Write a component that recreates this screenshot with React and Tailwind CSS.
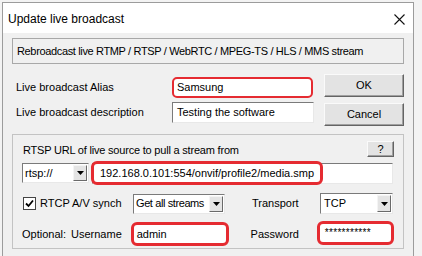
import React from "react";

function Arrow() {
  return (
    <svg width="7" height="4" viewBox="0 0 7 4" className="block">
      <path d="M0 0H7L3.5 4Z" fill="#000" />
    </svg>
  );
}

function DropBtn() {
  return (
    <div className="w-[14px] shrink-0 self-stretch my-[1px] mr-[1px] bg-[#e4e4e4] border-t border-l border-t-[#f4f4f4] border-l-[#f4f4f4] border-b border-r border-b-[#6a6a6a] border-r-[#6a6a6a] flex items-center justify-center">
      <Arrow />
    </div>
  );
}

function Combo({ text, w, h, pl }) {
  return (
    <div
      className={`flex bg-white border-t border-l border-t-[#7a7a7a] border-l-[#7a7a7a] border-b border-r border-b-[#e8e8e8] border-r-[#e8e8e8] ${w} ${h}`}
    >
      <div className={`flex-1 flex items-center whitespace-nowrap ${pl}`}>{text}</div>
      <DropBtn />
    </div>
  );
}

function Button({ children, w, h }) {
  return (
    <div
      className={`${w} ${h} bg-[#e3e3e3] border-t border-l border-t-[#fafafa] border-l-[#fafafa] border-b border-r border-b-[#646464] border-r-[#646464] flex items-center justify-center shadow-[inset_-1px_-1px_0_#a0a0a0]`}
    >
      {children}
    </div>
  );
}

export default function App() {
  return (
    <div className="w-[422px] h-[256px] bg-[#f3f3f3] overflow-hidden pt-[2px] pl-[2px] font-['Liberation_Sans',Arial,sans-serif] text-[11px] text-black leading-none">
      <div className="w-[412px] h-[260px] border border-[#9c9c9c] bg-[#f0f0f0]">
        {/* Title bar */}
        <div className="h-[30px] bg-white flex items-center justify-between pl-[5px] pr-[8px]">
          <span className="text-[12px] pt-[1px]">Update live broadcast</span>
          <svg width="11" height="11" viewBox="0 0 11 11" className="mt-[2px]">
            <path d="M0.5 0.5L10.5 10.5M10.5 0.5L0.5 10.5" stroke="#111" strokeWidth="1.1" />
          </svg>
        </div>

        <div className="px-[9px] pt-[5px]">
          {/* header box */}
          <div className="h-[26px] border border-[#a8a8a8] flex items-center pl-[4px] tracking-[-0.35px] whitespace-nowrap">
            Rebroadcast live RTMP / RTSP / WebRTC / MPEG-TS / HLS / MMS stream
          </div>

          {/* alias / description + buttons */}
          <div className="flex mt-[10px]">
            <div className="w-[312px] flex flex-col pt-[3px] gap-[4px]">
              <div className="flex items-center h-[21px]">
                <span className="w-[160px] pl-[4px]">Live broadcast Alias</span>
                <div className="w-[141px] h-[21px] bg-white border-2 border-[#e52b31] rounded-[5px] flex items-center pl-[3px]">
                  Samsung
                </div>
              </div>
              <div className="flex items-center h-[21px]">
                <span className="w-[160px] pl-[4px]">Live broadcast description</span>
                <div className="w-[142px] h-[21px] bg-white border-t border-l border-t-[#7a7a7a] border-l-[#7a7a7a] border-b border-r border-b-[#e8e8e8] border-r-[#e8e8e8] flex items-center pl-[4px]">
                  Testing the software
                </div>
              </div>
            </div>
            <div className="flex flex-col gap-[6px]">
              <Button w="w-[80px]" h="h-[23px]">OK</Button>
              <Button w="w-[80px]" h="h-[23px]">Cancel</Button>
            </div>
          </div>

          {/* group box */}
          <div className="mt-[8px] h-[115px] border border-[#c3c3c3] pl-[10px] pr-[9px] pt-[6px]">
            <div className="flex justify-between h-[16px]">
              <span className="pt-[4px] tracking-[-0.2px]">RTSP URL of live source to pull a stream from</span>
              <Button w="w-[27px]" h="h-[16px]">?</Button>
            </div>

            <div className="flex mt-[6px] -ml-px items-start">
              <Combo text="rtsp://" w="w-[67px]" h="h-[20px]" pl="pl-[2px]" />
              <div className="relative ml-[3px] w-[301px] h-[21px] bg-white border-t border-l border-t-[#7a7a7a] border-l-[#7a7a7a] border-b border-r border-b-[#e8e8e8] border-r-[#e8e8e8] flex items-center pl-[7px] whitespace-nowrap">
                192.168.0.101:554/onvif/profile2/media.smp
                <div className="absolute left-[-2px] top-[-3px] w-[232px] h-[24px] border-[3px] border-[#e52b31] rounded-[6px]" />
              </div>
            </div>

            <div className="flex mt-[9px] h-[21px] items-center">
              <div className="w-[110px] flex items-center">
                <div className="w-[13px] h-[13px] bg-white border border-[#444] flex items-center justify-center">
                  <svg width="9" height="9" viewBox="0 0 9 9">
                    <path d="M1 4.5L3.5 7L8 1.5" stroke="#000" strokeWidth="1.8" fill="none" />
                  </svg>
                </div>
                <span className="ml-[4px]">RTCP A/V synch</span>
              </div>
              <Combo text={<span className="tracking-[-0.4px]">Get all streams</span>} w="w-[92px]" h="h-[20px]" pl="pl-[2px]" />
              <span className="w-[95px] pl-[27px]">Transport</span>
              <Combo text="TCP" w="w-[73px]" h="h-[21px]" pl="pl-[3px]" />
            </div>

            <div className="flex mt-[8px] h-[24px] items-center -ml-px">
              <div className="w-[110px] flex">
                <span>Optional:</span>
                <span className="ml-[5px]">Username</span>
              </div>
              <div className="w-[99px] h-[24px] bg-white border-[3px] border-[#e52b31] rounded-[6px] flex items-center pl-[3px]">
                admin
              </div>
              <span className="w-[89px] pl-[22px]">Password</span>
              <div className="w-[78px] h-[24px] -mt-[2px] bg-white border-[3px] border-[#e52b31] rounded-[6px] flex items-center pl-[5px] text-[10px] tracking-[0.3px]">
                ***********
              </div>
            </div>
          </div>
        </div>
      </div>
    </div>
  );
}
